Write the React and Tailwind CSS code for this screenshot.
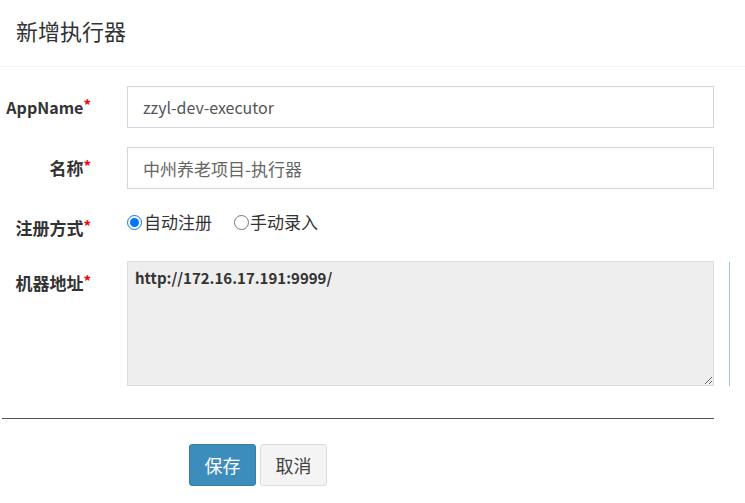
import React from "react";

const font = { fontFamily: '"Noto Sans CJK SC", "Noto Sans", sans-serif' };

function Label({ children, className = "" }) {
  return (
    <div className={`w-[91px] shrink-0 text-right font-bold leading-[22px] text-[#333] ${className}`}>
      {children}
      <span className="relative -top-[3px] text-[15px] text-[#ff0000]">*</span>
    </div>
  );
}

export default function App() {
  return (
    <div className="min-h-screen w-[745px] bg-white" style={font}>
      {/* modal header */}
      <div className="flex h-[67px] items-center border-b border-[#f4f4f4] pb-[5px] pl-[16px] text-[22px] text-[#333]">
        新增执行器
      </div>

      {/* form body */}
      <div className="pt-[19px]">
        <div className="flex h-[42px] items-center">
          <Label className="text-[16px]">AppName</Label>
          <input
            readOnly
            value="zzyl-dev-executor"
            className="ml-[36px] h-[42px] w-[587px] border border-[#d2d6de] px-[15px] text-[16px] text-[#555] outline-none"
          />
        </div>

        <div className="mt-[19px] flex h-[42px] items-center">
          <Label className="text-[17px]">名称</Label>
          <input
            readOnly
            value="中州养老项目-执行器"
            className="ml-[36px] h-[42px] w-[587px] border border-[#d2d6de] px-[15px] text-[17px] text-[#666] outline-none"
          />
        </div>

        <div className="mt-[22px] flex h-[28px] items-start">
          <Label className="pt-[6px] text-[17px]">注册方式</Label>
          <div className="ml-[36px] flex h-[22px] items-center text-[17px] text-[#333]">
            <label className="flex items-center">
              <input type="radio" name="mode" defaultChecked className="m-0 h-[15px] w-[15px]" />
              <span className="ml-[2px]">自动注册</span>
            </label>
            <label className="ml-[22px] flex items-center">
              <input type="radio" name="mode" className="m-0 h-[15px] w-[15px]" />
              <span className="ml-[1px]">手动录入</span>
            </label>
          </div>
        </div>

        <div className="mt-[22px] flex items-start">
          <Label className="pt-[11px] text-[17px]">机器地址</Label>
          <textarea
            readOnly
            defaultValue="http://172.16.17.191:9999/"
            className="ml-[36px] h-[125px] w-[587px] border border-[#ddd] bg-[#eee] px-[7px] py-[5px] text-[15px] font-bold leading-[22px] text-[#333] outline-none"
          />
          <div className="ml-[15px] mt-[1px] h-[124px] w-px bg-[#9ec0f0]" />
        </div>

        <div className="ml-[2px] mt-[32px] h-px w-[712px] bg-[#555]" />

        <div className="ml-[189px] mt-[25px] flex gap-[4px]">
          <button className="h-[42px] w-[67px] rounded-[3px] border border-[#367fa9] bg-[#3c8dbc] text-[18px] text-white">
            保存
          </button>
          <button className="h-[42px] w-[67px] rounded-[3px] border border-[#ddd] bg-[#f4f4f4] text-[18px] text-[#444]">
            取消
          </button>
        </div>
      </div>
    </div>
  );
}
